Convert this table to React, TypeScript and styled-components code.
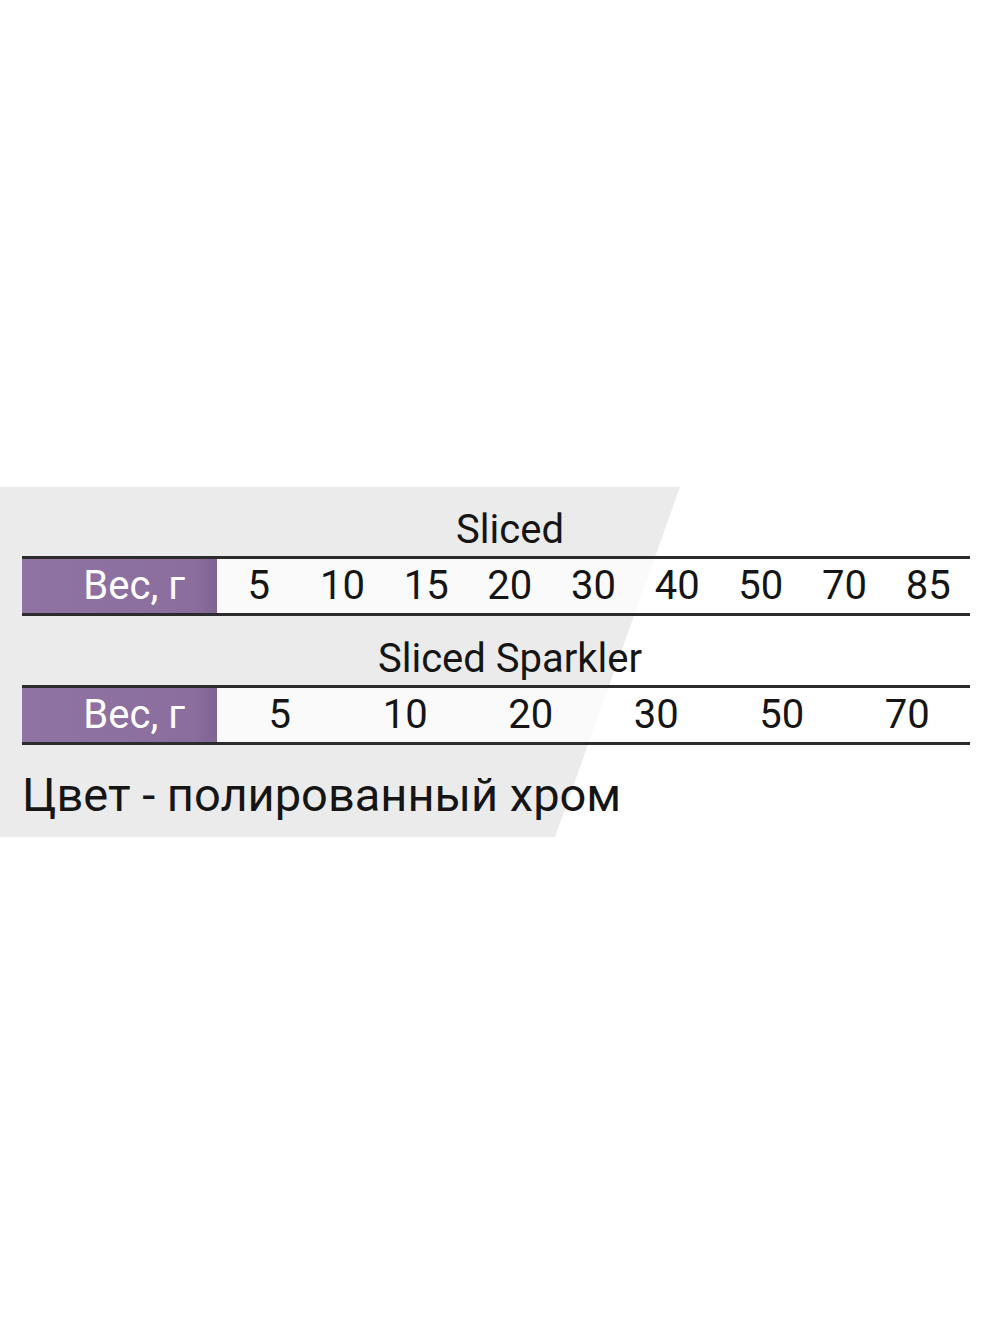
import { createGlobalStyle, styled } from "styled-components";

const GlobalStyle = createGlobalStyle`
  html, body {
    margin: 0;
    padding: 0;
    background: #ffffff;
  }
  body {
    font-family: Roboto, "Liberation Sans", sans-serif;
    color: #151515;
  }
`;

const Page = styled.div`
  width: 1000px;
  min-height: 1333px;
  padding-top: 487px;
  box-sizing: border-box;
`;

const Band = styled.section`
  position: relative;
  padding: 0 30px 17px 22px;

  &::before {
    content: "";
    position: absolute;
    inset: 0;
    background: #ebebeb;
    clip-path: polygon(0 0, 680px 0, 555px 100%, 0 100%);
    z-index: 0;
  }

  & > * {
    position: relative;
    z-index: 1;
  }
`;

const Title = styled.div`
  height: 44px;
  padding: 21px 0 4px;
  line-height: 44px;
  font-size: 40px;
  text-align: center;
  width: 976px;
`;

const Row = styled.div<{ $cols: number }>`
  display: grid;
  grid-template-columns: 195px repeat(${(p) => p.$cols}, 1fr);
  border-top: 3px solid #2c2c2c;
  border-bottom: 3px solid #2c2c2c;
  height: 54px;
`;

const Label = styled.div`
  background: linear-gradient(90deg, #8f73a3 0%, #8b6e9e 88%, #7f6392 100%);
  color: #ffffff;
  font-size: 40px;
  line-height: 54px;
  text-align: right;
  padding-right: 32px;
`;

const Cell = styled.div`
  background: rgba(255, 255, 255, 0.72);
  font-size: 40px;
  line-height: 54px;
  text-align: center;
`;

const Note = styled.div`
  margin-top: 25px;
  line-height: 50px;
  font-size: 47px;
`;

const sliced = [5, 10, 15, 20, 30, 40, 50, 70, 85];
const sparkler = [5, 10, 20, 30, 50, 70];

export default function App() {
  return (
    <Page>
      <GlobalStyle />
      <Band>
        <Title>Sliced</Title>
        <Row $cols={sliced.length}>
          <Label>Вес, г</Label>
          {sliced.map((w) => (
            <Cell key={w}>{w}</Cell>
          ))}
        </Row>
        <Title>Sliced Sparkler</Title>
        <Row $cols={sparkler.length}>
          <Label>Вес, г</Label>
          {sparkler.map((w) => (
            <Cell key={w}>{w}</Cell>
          ))}
        </Row>
        <Note>Цвет - полированный хром</Note>
      </Band>
    </Page>
  );
}
